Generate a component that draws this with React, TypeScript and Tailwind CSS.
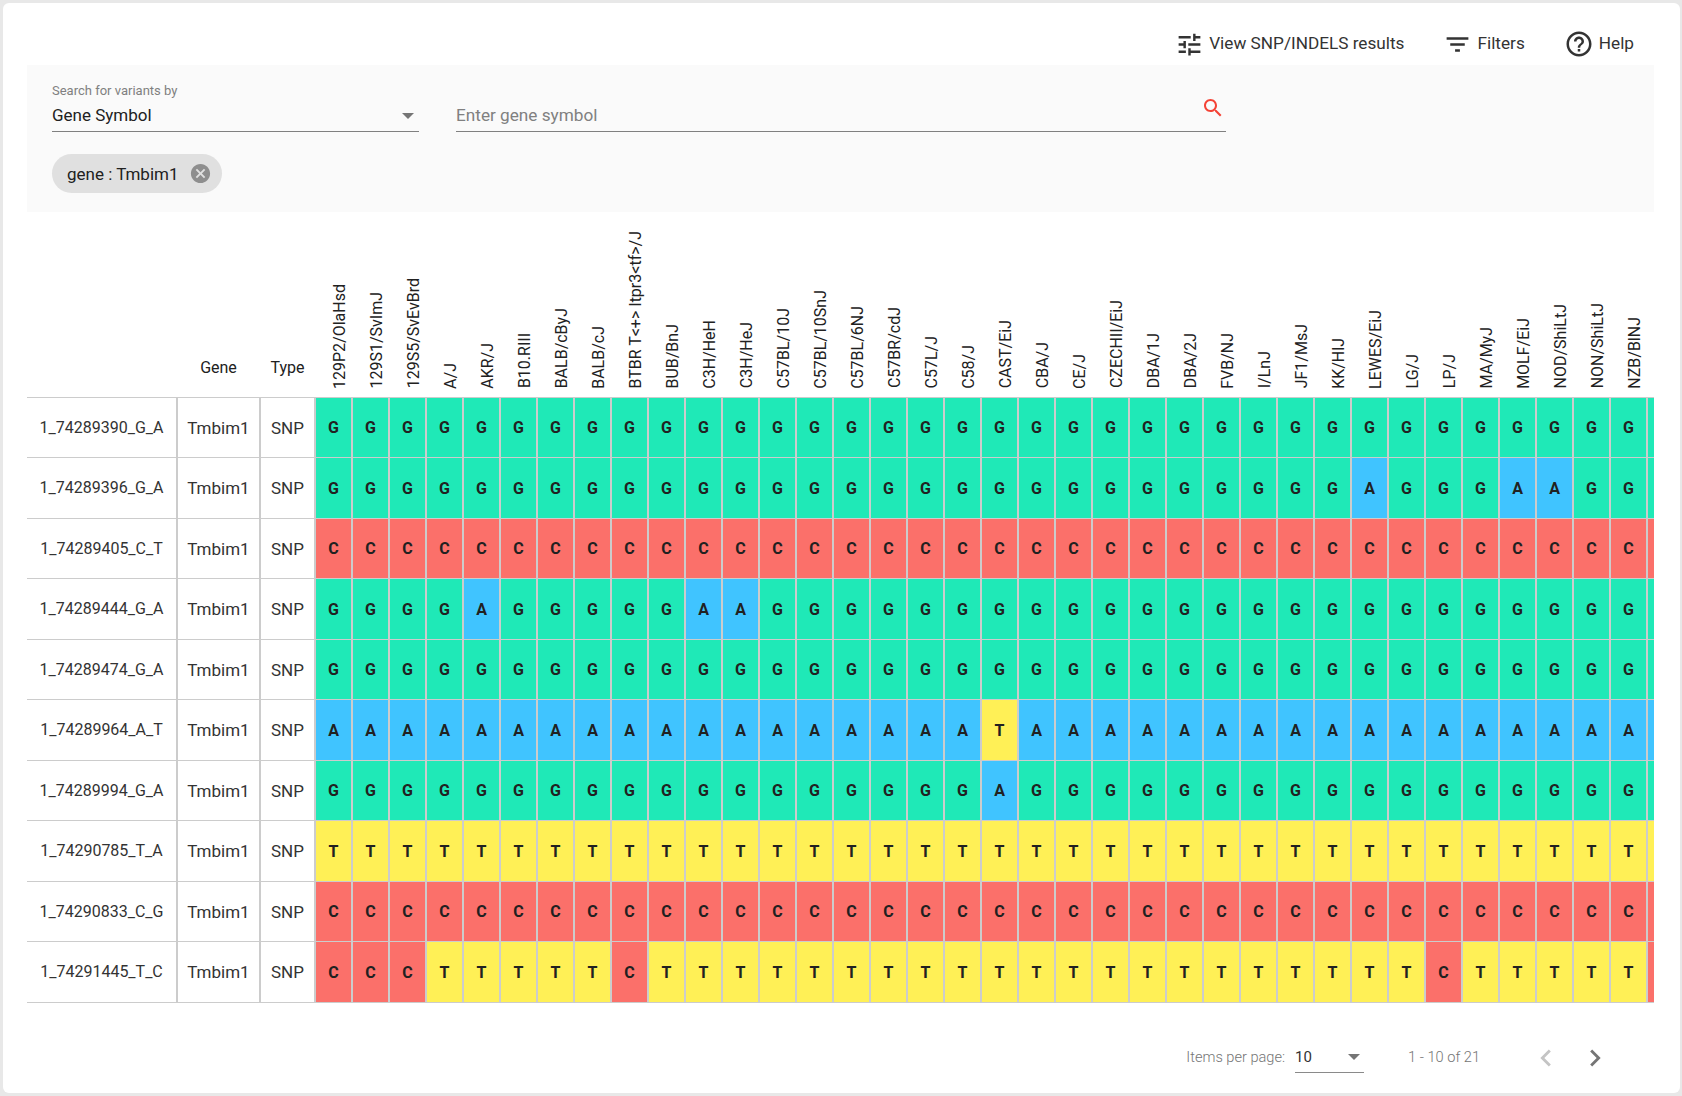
const strains = [
  "129P2/OlaHsd", "129S1/SvImJ", "129S5/SvEvBrd", "A/J", "AKR/J", "B10.RIII", "BALB/cByJ", "BALB/cJ",
  "BTBR T<+> Itpr3<tf>/J", "BUB/BnJ", "C3H/HeH", "C3H/HeJ", "C57BL/10J", "C57BL/10SnJ", "C57BL/6NJ", "C57BR/cdJ",
  "C57L/J", "C58/J", "CAST/EiJ", "CBA/J", "CE/J", "CZECHII/EiJ", "DBA/1J", "DBA/2J", "FVB/NJ", "I/LnJ", "JF1/MsJ",
  "KK/HlJ", "LEWES/EiJ", "LG/J", "LP/J", "MA/MyJ", "MOLF/EiJ", "NOD/ShiLtJ", "NON/ShiLtJ", "NZB/BlNJ", "",
];

// base allele for each row, then the strains that differ from it
const rows: { id: string; base: string; other?: Record<string, string> }[] = [
  { id: "1_74289390_G_A", base: "G" },
  { id: "1_74289396_G_A", base: "G", other: { "LEWES/EiJ": "A", "MOLF/EiJ": "A", "NOD/ShiLtJ": "A" } },
  { id: "1_74289405_C_T", base: "C" },
  { id: "1_74289444_G_A", base: "G", other: { "AKR/J": "A", "C3H/HeH": "A", "C3H/HeJ": "A" } },
  { id: "1_74289474_G_A", base: "G" },
  { id: "1_74289964_A_T", base: "A", other: { "CAST/EiJ": "T" } },
  { id: "1_74289994_G_A", base: "G", other: { "CAST/EiJ": "A" } },
  { id: "1_74290785_T_A", base: "T" },
  { id: "1_74290833_C_G", base: "C" },
  {
    id: "1_74291445_T_C",
    base: "T",
    other: {
      "129P2/OlaHsd": "C", "129S1/SvImJ": "C", "129S5/SvEvBrd": "C", "BTBR T<+> Itpr3<tf>/J": "C", "LP/J": "C", "": "C",
    },
  },
];

const alleleColors: Record<string, string> = {
  G: "bg-[#1fe9b7]",
  A: "bg-[#40c4ff]",
  C: "bg-[#fb706a]",
  T: "bg-[#fff056]",
};

function MaterialIcon({ d, className }: { d: string; className: string }) {
  return (
    <svg viewBox="0 0 24 24" fill="currentColor" className={className}>
      <path d={d} />
    </svg>
  );
}

const icons = {
  tune: "M3 17v2h6v-2H3zM3 5v2h10V5H3zm10 16v-2h8v-2h-8v-2h-2v6h2zM7 9v2H3v2h4v2h2V9H7zm14 4v-2H11v2h10zm-6-4h2V7h4V5h-4V3h-2v6z",
  filter: "M10 18h4v-2h-4v2zM3 6v2h18V6H3zm3 7h12v-2H6v2z",
  help: "M11 18h2v-2h-2v2zm1-16C6.48 2 2 6.48 2 12s4.48 10 10 10 10-4.48 10-10S17.52 2 12 2zm0 18c-4.41 0-8-3.59-8-8s3.59-8 8-8 8 3.59 8 8-3.59 8-8 8zm0-14c-2.21 0-4 1.79-4 4h2c0-1.1.9-2 2-2s2 .9 2 2c0 2-3 1.75-3 5h2c0-2.25 3-2.5 3-5 0-2.21-1.79-4-4-4z",
  search: "M15.5 14h-.79l-.28-.27C15.41 12.59 16 11.11 16 9.5 16 5.91 13.09 3 9.5 3S3 5.91 3 9.5 5.91 16 9.5 16c1.61 0 3.09-.59 4.23-1.57l.27.28v.79l5 4.99L20.49 19l-4.99-5zm-6 0C7.01 14 5 11.99 5 9.5S7.01 5 9.5 5 14 7.01 14 9.5 11.99 14 9.5 14z",
  cancel: "M12 2C6.47 2 2 6.47 2 12s4.47 10 10 10 10-4.47 10-10S17.53 2 12 2zm5 13.59L15.59 17 12 13.41 8.41 17 7 15.59 10.59 12 7 8.41 8.41 7 12 10.59 15.59 7 17 8.41 13.41 12 17 15.59z",
  left: "M15.41 7.41L14 6l-6 6 6 6 1.41-1.41L10.83 12z",
  right: "M10 6L8.59 7.41 13.17 12l-4.58 4.59L10 18l6-6z",
};

export default function App() {
  return (
    <div className="h-[1096px] bg-[#e8e8e8] pt-[3px] pl-[3px] pr-[2px] [font-family:Roboto,sans-serif] text-[#212121]">
      <div className="h-[1090px] rounded-md bg-white pl-[24px] pr-[26px]">
        {/* toolbar */}
        <div className="flex h-[62px] items-center justify-end pt-[20px] pr-[20px] text-[17.2px] text-[#333]">
          <div className="flex items-center gap-[5px]">
            <MaterialIcon d={icons.tune} className="h-[29px] w-[29px]" />
            <span>View SNP/INDELS results</span>
          </div>
          <div className="ml-[39px] flex items-center gap-[5px]">
            <MaterialIcon d={icons.filter} className="h-[29px] w-[29px]" />
            <span>Filters</span>
          </div>
          <div className="ml-[39px] flex items-center gap-[5px]">
            <MaterialIcon d={icons.help} className="h-[30px] w-[30px]" />
            <span>Help</span>
          </div>
        </div>

        {/* search panel */}
        <div className="h-[147px] bg-[#fafafa] pl-[25px] pt-[19px]">
          <div className="flex items-start gap-[37px]">
            <div className="h-[48px] w-[367px] border-b border-[#808080]">
              <div className="text-[13px] leading-[14px] text-[#808080]">Search for variants by</div>
              <div className="relative mt-[4px] text-[17px] leading-[26px]">
                Gene Symbol
                <span className="absolute right-[5px] top-[11px] h-0 w-0 border-x-[6px] border-t-[6px] border-x-transparent border-t-[#757575]" />
              </div>
            </div>
            <div className="relative h-[48px] w-[770px] border-b border-[#808080] pt-[18px] text-[17.2px] leading-[26px] text-[#808080]">
              Enter gene symbol
              <MaterialIcon d={icons.search} className="absolute right-[1px] top-[12px] h-[24px] w-[24px] text-[#f44336]" />
            </div>
          </div>
          <div className="mt-[22px] inline-flex h-[39px] w-[170px] items-center justify-between rounded-full bg-[#e0e0e0] pl-[15px] pr-[10px] text-[17px]">
            <span className="pt-[2px]">gene : Tmbim1</span>
            <MaterialIcon d={icons.cancel} className="h-[23px] w-[23px] text-[#8e8e8e]" />
          </div>
        </div>

        {/* genotype table */}
        <div className="w-[1627px] overflow-hidden">
          <table className="w-[1656px] table-fixed border-collapse text-[16px]">
            <colgroup>
              <col className="w-[150px]" />
              <col className="w-[83px]" />
              <col className="w-[55px]" />
              {strains.map((s) => (
                <col key={s} className="w-[37px]" />
              ))}
            </colgroup>
            <thead>
              <tr className="h-[185px]">
                <th />
                <th className="pb-[20px] align-bottom font-normal leading-[19px]">Gene</th>
                <th className="pb-[20px] align-bottom font-normal leading-[19px]">Type</th>
                {strains.map((s) => (
                  <th key={s} className="overflow-visible pb-[1px] pl-[15px] text-left align-bottom font-normal">
                    <span className="inline-block whitespace-nowrap leading-[19px] [writing-mode:vertical-rl] rotate-180">
                      {s}
                    </span>
                  </th>
                ))}
              </tr>
            </thead>
            <tbody>
              {rows.map((row) => (
                <tr key={row.id} className="h-[60.5px] border-y border-[#cccccc]">
                  <td className="border-r-2 border-[#cccccc] pt-[1px] text-center text-[16px] text-[#333]">{row.id}</td>
                  <td className="border-r-2 border-[#cccccc] pt-[2px] text-center text-[17px] text-[#333]">Tmbim1</td>
                  <td className="border-r-2 border-[#cccccc] pt-[2px] text-center text-[17px] text-[#333]">SNP</td>
                  {strains.map((s) => {
                    const allele = row.other?.[s] ?? row.base;
                    return (
                      <td key={s} className={`border-r-2 border-[#cccccc] pt-[2px] text-center font-bold ${alleleColors[allele]}`}>
                        {s ? allele : null}
                      </td>
                    );
                  })}
                </tr>
              ))}
            </tbody>
          </table>
        </div>

        {/* pagination */}
        <div className="flex items-center justify-end pt-[37px] pr-[42px] text-[14.6px] font-light text-[#757575]">
          <span className="mt-[1px]">Items per page:</span>
          <div className="relative ml-[10px] h-[31px] w-[69px] border-b border-[#8a8a8a] pt-[5px] text-[15px] font-normal leading-[20px] text-[#333]">
            10
            <span className="absolute right-[4px] top-[12px] h-0 w-0 border-x-[6px] border-t-[6px] border-x-transparent border-t-[#757575]" />
          </div>
          <span className="ml-[44px] mt-[1px]">1 - 10 of 21</span>
          <MaterialIcon d={icons.left} className="ml-[49px] mt-[1px] h-[34px] w-[34px] text-[#c4c4c4]" />
          <MaterialIcon d={icons.right} className="ml-[15px] mt-[1px] h-[34px] w-[34px] text-[#757575]" />
        </div>
      </div>
    </div>
  );
}
